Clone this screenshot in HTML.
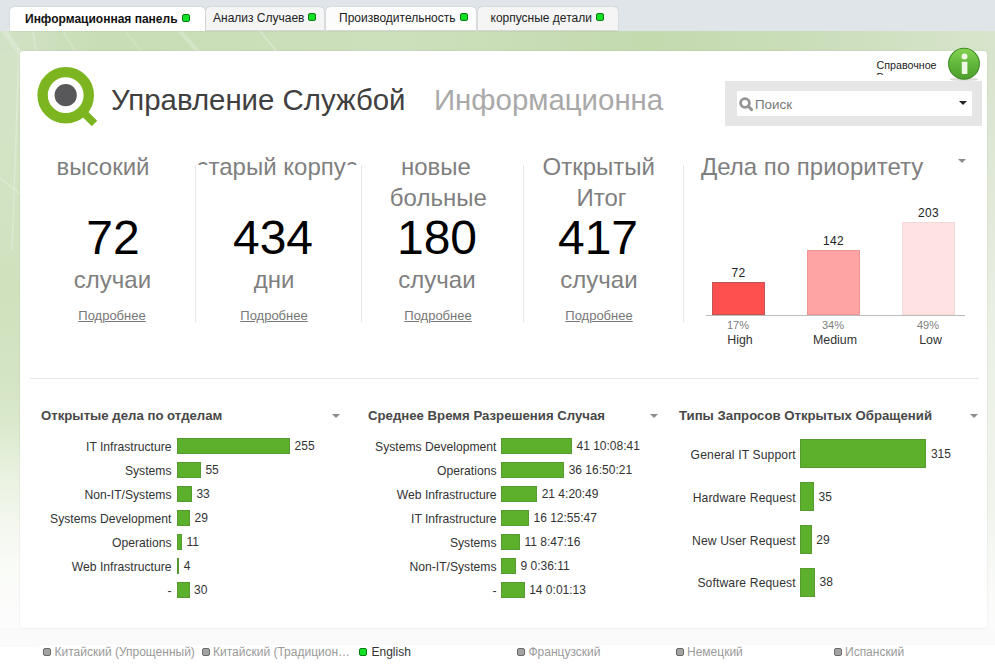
<!DOCTYPE html>
<html><head><meta charset="utf-8">
<style>
html,body{margin:0;padding:0;width:995px;height:671px;overflow:hidden;background:#fff;font-family:"Liberation Sans",sans-serif;}
#root{position:absolute;left:0;top:0;width:995px;height:671px;overflow:hidden;}
.t{position:absolute;white-space:nowrap;line-height:1;}
.tabbar{position:absolute;left:0;top:0;width:995px;height:31px;background:#dfe5e8;}
.tab{position:absolute;top:7px;height:23px;background:#f5f5f5;border-radius:4px 4px 0 0;box-shadow:0 0 1px rgba(0,0,0,.35);border-bottom:1px solid #d6d9d6;}
.tab.act{top:6.5px;height:24.5px;background:#fff;border-bottom:none;}
.sq{position:absolute;width:6px;height:6px;background:#14e028;border:1px solid #0b7a12;border-radius:2px;}
.bg{position:absolute;left:0;top:31px;width:995px;height:640px;
 background:linear-gradient(180deg,#d3e3c6 0px,#d3e4c5 120px,#cfe1bd 260px,#d5e5c5 360px,#dceacf 400px,#e8f1df 440px,#f3f7ee 490px,#fafcf8 540px,#fcfcfc 590px,#ffffff 614px);}
.rm{position:absolute;left:987px;top:31px;width:8px;height:597px;background:linear-gradient(180deg,#d6e2cb 0px,#e2e9d9 170px,#ecf1e7 320px,#f0f4ec 470px,#fafbf9 560px,#fdfdfd 640px);}
.band{position:absolute;left:0;top:628px;width:995px;height:17px;background:#fafafa;}
.band2{position:absolute;left:0;top:645px;width:39px;height:2px;background:#fafafa;}
.panel{position:absolute;left:20px;top:51px;width:967px;height:577px;background:#fff;border-radius:3px;box-shadow:0 0 2px rgba(0,0,0,.12);}
.sep{position:absolute;width:1px;background:#e6e6e6;top:165px;height:157px;}
.kt{color:#7f7f7f;font-size:24px;text-align:center;}
.kn{color:#000;font-size:48px;text-align:center;}
.lnk{color:#777;font-size:13px;text-decoration:underline;}
.bar{position:absolute;background:#5cb02c;box-shadow:inset 0 0 0 1px rgba(70,90,60,0.25);}
.lbl{position:absolute;white-space:nowrap;line-height:1;font-size:12.15px;color:#333;text-align:right;}
.val{position:absolute;white-space:nowrap;line-height:1;font-size:12px;color:#333;}
.ctitle{position:absolute;white-space:nowrap;line-height:1;font-size:13.2px;font-weight:bold;color:#484848;}
.arr{position:absolute;width:0;height:0;border-left:4px solid transparent;border-right:4px solid transparent;border-top:4px solid #8c8c8c;}
.lang{position:absolute;white-space:nowrap;line-height:1;font-size:12px;color:#9a9a9a;}
.gsq{position:absolute;width:6px;height:6px;background:#a3a3a3;border:1px solid #6a6a6a;border-radius:2px;}
</style></head><body><div id="root">
<div class="tabbar"></div>
<div class="bg"></div>
<div class="rm"></div>
<div class="band"></div>
<div class="band2"></div>
<div style="position:absolute;left:0;top:31px;width:995px;height:21px;background:linear-gradient(90deg,#d2e2c6 0px,#c8ddb5 100px,#cde0bd 400px,#c3d9ae 650px,#cddfbd 850px,#d8e5cc 995px);"></div>
<svg style="position:absolute;left:0;top:31px;" width="995" height="640" viewBox="0 31 995 640">
 <g stroke="#ffffff" fill="none" stroke-linecap="butt">
  <line x1="4" y1="31" x2="20" y2="53" stroke-width="5" stroke-opacity="0.22"/>
  <line x1="33" y1="31" x2="36" y2="53" stroke-width="1.5" stroke-opacity="0.25"/>
  <line x1="63" y1="31" x2="76" y2="53" stroke-width="2" stroke-opacity="0.2"/>
  <line x1="126" y1="31" x2="142" y2="53" stroke-width="2" stroke-opacity="0.15"/>
  <line x1="180" y1="31" x2="199" y2="53" stroke-width="4" stroke-opacity="0.22"/>
  <line x1="260" y1="31" x2="278" y2="53" stroke-width="2" stroke-opacity="0.25"/>
  <path d="M19 52 Q17 120 12 250" stroke-width="1.5" stroke-opacity="0.25"/>
  <line x1="0" y1="178" x2="20" y2="194" stroke-width="1.5" stroke-opacity="0.25"/>
 </g>
</svg>

<!-- tabs -->
<div class="tab act" style="left:10px;width:195px;"></div>
<div class="t" style="left:25px;top:13px;font-size:12px;font-weight:bold;color:#111;">Информационная панель</div>
<div class="sq" style="left:182px;top:14px;"></div>
<div class="tab" style="left:206px;width:118px;"></div>
<div class="t" style="left:213px;top:12px;font-size:12px;color:#222;">Анализ Случаев</div>
<div class="sq" style="left:308px;top:13px;"></div>
<div class="tab" style="left:326px;width:150px;background:#fcfcfc;"></div>
<div class="t" style="left:339px;top:12px;font-size:12px;color:#222;">Производительность</div>
<div class="sq" style="left:460px;top:13px;"></div>
<div class="tab" style="left:478px;width:140px;"></div>
<div class="t" style="left:490.5px;top:12px;font-size:12px;color:#222;">корпусные детали</div>
<div class="sq" style="left:596px;top:13px;"></div>

<div class="panel"></div>

<!-- logo -->
<svg style="position:absolute;left:30px;top:60px;" width="80" height="75" viewBox="30 60 80 75">
 <line x1="82" y1="111" x2="94.5" y2="123.5" stroke="#7cb51f" stroke-width="7.6"/>
 <circle cx="65.7" cy="95.2" r="23.1" fill="none" stroke="#7cb51f" stroke-width="10.4"/>
 <circle cx="65.7" cy="95.2" r="11.1" fill="#58585a"/>
</svg>
<div class="t" style="left:111px;top:84.8px;font-size:29.4px;color:#404040;">Управление Службой</div>
<div class="t" style="left:434px;top:84.8px;font-size:29.4px;color:#a9a9a9;">Информационна</div>

<!-- help -->
<div style="position:absolute;left:876px;top:57px;width:64px;height:17.8px;overflow:hidden;">
 <div class="t" style="left:0.5px;top:1.5px;font-size:10.7px;color:#222;line-height:12.6px;white-space:normal;width:64px;">Справочное Руководство</div>
</div>
<svg style="position:absolute;left:945px;top:45px;" width="38" height="38" viewBox="945 45 38 38">
 <defs><linearGradient id="ig" x1="0" y1="0" x2="0" y2="1"><stop offset="0" stop-color="#86d252"/><stop offset="0.5" stop-color="#62b83c"/><stop offset="1" stop-color="#4c9e2b"/></linearGradient></defs>
 <ellipse cx="964" cy="79.3" rx="15" ry="1.6" fill="rgba(0,0,0,0.14)"/>
 <circle cx="964" cy="63.7" r="15.4" fill="url(#ig)" stroke="#3f8d25" stroke-width="1.1"/>
 <circle cx="964.5" cy="56.4" r="3" fill="#eef8e2"/>
 <rect x="961.8" y="61.7" width="5.6" height="12.4" rx="0.6" fill="#eef8e2"/>
</svg>

<!-- search -->
<div style="position:absolute;left:725px;top:81px;width:257px;height:45px;background:#e6e6e6;"></div>
<div style="position:absolute;left:737px;top:91px;width:235px;height:25px;background:#fff;"></div>
<svg style="position:absolute;left:738px;top:96px;" width="16" height="16" viewBox="0 0 16 16">
 <circle cx="7" cy="7" r="4.4" fill="none" stroke="#959595" stroke-width="2.8"/>
 <line x1="10.2" y1="10.2" x2="13.6" y2="13.6" stroke="#959595" stroke-width="3" stroke-linecap="round"/>
</svg>
<div class="t" style="left:755px;top:98px;font-size:13.4px;color:#777;">Поиск</div>
<div class="arr" style="left:959px;top:101px;border-top-color:#222;border-left-width:4px;border-right-width:4px;border-top-width:4px;"></div>

<!-- KPI separators -->

<!-- KPI 1 -->
<div class="t kt" style="left:53px;top:155px;width:100px;">высокий</div>
<div class="t kn" style="left:63px;top:214px;width:100px;">72</div>
<div class="t kt" style="left:62.5px;top:268px;width:100px;">случаи</div>
<div class="t lnk" style="left:62px;top:309px;width:100px;text-align:center;">Подробнее</div>
<!-- KPI 2 -->
<div class="t kt" style="left:177px;top:155px;width:200px;">старый корпус</div>
<div style="position:absolute;left:186px;top:165px;width:22px;height:20px;background:#fff;"></div>
<div style="position:absolute;left:345.5px;top:165px;width:25px;height:20px;background:#fff;"></div>
<div class="t kn" style="left:223px;top:214px;width:100px;">434</div>
<div class="t kt" style="left:224px;top:268px;width:100px;">дни</div>
<div class="t lnk" style="left:224px;top:309px;width:100px;text-align:center;">Подробнее</div>
<!-- KPI 3 -->
<div class="t kt" style="left:386px;top:155px;width:100px;">новые</div>
<div class="t kt" style="left:388.3px;top:186px;width:100px;">больные</div>
<div class="t kn" style="left:387px;top:214px;width:100px;">180</div>
<div class="t kt" style="left:387px;top:268px;width:100px;">случаи</div>
<div class="t lnk" style="left:388px;top:309px;width:100px;text-align:center;">Подробнее</div>
<!-- KPI 4 -->
<div class="t kt" style="left:542.6px;top:155px;width:100px;">Открытый</div>
<div class="t kt" style="left:551.5px;top:186px;width:100px;">Итог</div>
<div class="t kn" style="left:548px;top:214px;width:100px;">417</div>
<div class="t kt" style="left:549px;top:268px;width:100px;">случаи</div>
<div class="t lnk" style="left:549px;top:309px;width:100px;text-align:center;">Подробнее</div>

<div class="sep" style="left:195px;"></div>
<div class="sep" style="left:361px;"></div>
<div class="sep" style="left:523px;"></div>
<div class="sep" style="left:683px;"></div>
<!-- priority chart -->
<div class="t" style="left:701px;top:154.8px;font-size:24px;color:#7f7f7f;">Дела по приоритету</div>
<div class="arr" style="left:958px;top:159px;"></div>
<div class="bar" style="left:712px;top:282px;width:53px;height:33px;background:#ff5050;box-shadow:inset 0 0 0 1px #c05555;"></div>
<div class="bar" style="left:807px;top:250px;width:53px;height:65px;background:#ffa4a4;box-shadow:inset 0 0 0 1px rgba(120,60,60,0.12);"></div>
<div class="bar" style="left:902px;top:222px;width:53px;height:93px;background:#ffe2e2;box-shadow:inset 0 0 0 1px rgba(120,60,60,0.06);"></div>
<div style="position:absolute;left:706px;top:315px;width:259px;height:1px;background:#bdbdbd;"></div>
<div class="t" style="left:688.5px;top:267px;width:100px;text-align:center;font-size:12px;letter-spacing:0.4px;color:#222;">72</div>
<div class="t" style="left:783.5px;top:235px;width:100px;text-align:center;font-size:12px;letter-spacing:0.4px;color:#222;">142</div>
<div class="t" style="left:878.5px;top:207px;width:100px;text-align:center;font-size:12px;letter-spacing:0.4px;color:#222;">203</div>
<div class="t" style="left:688px;top:320.3px;width:100px;text-align:center;font-size:11px;color:#808080;">17%</div>
<div class="t" style="left:783px;top:320.3px;width:100px;text-align:center;font-size:11px;color:#808080;">34%</div>
<div class="t" style="left:878px;top:320.3px;width:100px;text-align:center;font-size:11px;color:#808080;">49%</div>
<div class="t" style="left:690px;top:333.8px;width:100px;text-align:center;font-size:12.4px;color:#333;">High</div>
<div class="t" style="left:785px;top:333.8px;width:100px;text-align:center;font-size:12.4px;color:#333;">Medium</div>
<div class="t" style="left:880.5px;top:333.8px;width:100px;text-align:center;font-size:12.4px;color:#333;">Low</div>

<!-- horizontal sep -->
<div style="position:absolute;left:30px;top:378px;width:949px;height:1px;background:#e6e6e6;"></div>
<!-- bottom charts -->
<div class="ctitle" style="left:41px;top:408.8px;">Открытые дела по отделам</div>
<div class="arr" style="left:332px;top:414px;"></div>
<div class="ctitle" style="left:368px;top:408.8px;">Среднее Время Разрешения Случая</div>
<div class="arr" style="left:650px;top:414px;"></div>
<div class="ctitle" style="left:679px;top:408.8px;">Типы Запросов Открытых Обращений</div>
<div class="arr" style="left:970px;top:414px;"></div>
<div class="lbl" style="right:823.5px;top:440.64px;">IT Infrastructure</div>
<div class="bar" style="left:177px;top:438px;width:113.1px;height:16px;"></div>
<div class="val" style="left:294.6px;top:439.64px;">255</div>
<div class="lbl" style="right:823.5px;top:464.64px;">Systems</div>
<div class="bar" style="left:177px;top:462px;width:23.9px;height:16px;"></div>
<div class="val" style="left:205.4px;top:463.64px;">55</div>
<div class="lbl" style="right:823.5px;top:488.64px;">Non-IT/Systems</div>
<div class="bar" style="left:177px;top:486px;width:14.9px;height:16px;"></div>
<div class="val" style="left:196.4px;top:487.64px;">33</div>
<div class="lbl" style="right:823.5px;top:512.64px;">Systems Development</div>
<div class="bar" style="left:177px;top:510px;width:13.1px;height:16px;"></div>
<div class="val" style="left:194.6px;top:511.64px;">29</div>
<div class="lbl" style="right:823.5px;top:536.64px;">Operations</div>
<div class="bar" style="left:177px;top:534px;width:5px;height:16px;"></div>
<div class="val" style="left:186.5px;top:535.64px;">11</div>
<div class="lbl" style="right:823.5px;top:560.64px;">Web Infrastructure</div>
<div class="bar" style="left:177px;top:558px;width:2.3px;height:16px;"></div>
<div class="val" style="left:183.8px;top:559.64px;">4</div>
<div class="lbl" style="right:823.5px;top:584.64px;">-</div>
<div class="bar" style="left:177px;top:582px;width:12.5px;height:16px;"></div>
<div class="val" style="left:194.0px;top:583.64px;">30</div>
<div class="lbl" style="right:498.5px;top:440.64px;">Systems Development</div>
<div class="bar" style="left:501px;top:438px;width:71px;height:16px;"></div>
<div class="val" style="left:576.5px;top:439.64px;">41 10:08:41</div>
<div class="lbl" style="right:498.5px;top:464.64px;">Operations</div>
<div class="bar" style="left:501px;top:462px;width:63.2px;height:16px;"></div>
<div class="val" style="left:568.7px;top:463.64px;">36 16:50:21</div>
<div class="lbl" style="right:498.5px;top:488.64px;">Web Infrastructure</div>
<div class="bar" style="left:501px;top:486px;width:36.2px;height:16px;"></div>
<div class="val" style="left:541.7px;top:487.64px;">21 4:20:49</div>
<div class="lbl" style="right:498.5px;top:512.64px;">IT Infrastructure</div>
<div class="bar" style="left:501px;top:510px;width:28px;height:16px;"></div>
<div class="val" style="left:533.5px;top:511.64px;">16 12:55:47</div>
<div class="lbl" style="right:498.5px;top:536.64px;">Systems</div>
<div class="bar" style="left:501px;top:534px;width:19px;height:16px;"></div>
<div class="val" style="left:524.5px;top:535.64px;">11 8:47:16</div>
<div class="lbl" style="right:498.5px;top:560.64px;">Non-IT/Systems</div>
<div class="bar" style="left:501px;top:558px;width:15px;height:16px;"></div>
<div class="val" style="left:520.5px;top:559.64px;">9 0:36:11</div>
<div class="lbl" style="right:498.5px;top:584.64px;">-</div>
<div class="bar" style="left:501px;top:582px;width:23.7px;height:16px;"></div>
<div class="val" style="left:529.2px;top:583.64px;">14 0:01:13</div>
<div class="lbl" style="right:199.20000000000005px;top:448.74px;letter-spacing:0.12px;">General IT Support</div>
<div class="bar" style="left:800.3px;top:438.7px;width:126.1px;height:29px;"></div>
<div class="val" style="left:930.9px;top:447.74px;">315</div>
<div class="lbl" style="right:199.20000000000005px;top:491.64px;letter-spacing:0.12px;">Hardware Request</div>
<div class="bar" style="left:800.3px;top:481.7px;width:13.8px;height:29px;"></div>
<div class="val" style="left:818.6px;top:490.64px;">35</div>
<div class="lbl" style="right:199.20000000000005px;top:534.54px;letter-spacing:0.12px;">New User Request</div>
<div class="bar" style="left:800.3px;top:524.7px;width:11.5px;height:29px;"></div>
<div class="val" style="left:816.3px;top:533.54px;">29</div>
<div class="lbl" style="right:199.20000000000005px;top:577.44px;letter-spacing:0.12px;">Software Request</div>
<div class="bar" style="left:800.3px;top:567.7px;width:14.7px;height:29px;"></div>
<div class="val" style="left:819.5px;top:576.44px;">38</div>
<!-- footer -->
<div class="gsq" style="left:43px;top:648px;"></div>
<div class="lang" style="left:54.5px;top:646.1px;">Китайский (Упрощенный)</div>
<div class="gsq" style="left:202px;top:648px;"></div>
<div class="lang" style="left:213px;top:646.1px;">Китайский (Традицион…</div>
<div class="sq" style="left:359px;top:648px;"></div>
<div class="lang" style="left:371.5px;top:646.1px;color:#333;">English</div>
<div class="gsq" style="left:517px;top:648px;"></div>
<div class="lang" style="left:528.5px;top:646.1px;">Французский</div>
<div class="gsq" style="left:675.5px;top:648px;"></div>
<div class="lang" style="left:687px;top:646.1px;">Немецкий</div>
<div class="gsq" style="left:833.5px;top:648px;"></div>
<div class="lang" style="left:845px;top:646.1px;">Испанский</div>
</div></body></html>
